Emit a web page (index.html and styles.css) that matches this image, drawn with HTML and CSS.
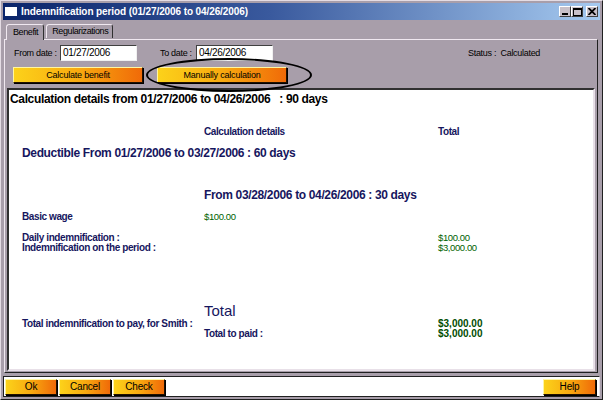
FILE: index.html
```html
<!DOCTYPE html>
<html>
<head>
<meta charset="utf-8">
<link rel="stylesheet" href="styles.css">
</head>
<body>
<div class="window">
  <div class="titlebar">
    <span class="appicon"></span>
    <span class="title">Indemnification period (01/27/2006 to 04/26/2006)</span>
    <span class="wbtns">
      <span class="wbtn"><svg width="8" height="7" viewBox="0 0 8 7"><rect x="1" y="5" width="6" height="2" fill="#000"/></svg></span>
      <span class="wbtn"><svg width="9" height="8" viewBox="0 0 9 8"><rect x="0.5" y="0.5" width="8" height="7" fill="none" stroke="#000"/><rect x="0" y="0" width="9" height="2" fill="#000"/></svg></span>
      <span class="wbtn close"><svg width="8" height="7" viewBox="0 0 8 7"><path d="M0.5 0 L7.5 7 M7.5 0 L0.5 7" stroke="#000" stroke-width="1.8"/></svg></span>
    </span>
  </div>
  <div class="tabs">
    <span class="tab active">Benefit</span>
    <span class="tab">Regularizations</span>
  </div>
  <div class="panel">
    <div class="formrow">
      <span class="lbl from">From date :</span>
      <span class="field">01/27/2006</span>
      <span class="lbl to">To date :</span>
      <span class="field">04/26/2006</span>
      <span class="status">Status :&nbsp; Calculated</span>
    </div>
    <div class="btnrow">
      <span class="obtn wide">Calculate benefit</span>
      <span class="obtn wide second">Manually calculation</span>
    </div>
    <div class="ellipse"></div>
    <div class="report">
      <div class="r-head">Calculation details from 01/27/2006 to 04/26/2006 &nbsp; : 90 days</div>
      <div class="row colheads"><span></span><span>Calculation details</span><span>Total</span></div>
      <div class="r-sub deduct">Deductible From 01/27/2006 to 03/27/2006 : 60 days</div>
      <div class="row period"><span></span><span class="r-sub">From 03/28/2006 to 04/26/2006 : 30 days</span><span></span></div>
      <div class="row wage"><span>Basic wage</span><span class="money">$100.00</span><span></span></div>
      <div class="row daily"><span>Daily indemnification :</span><span></span><span class="money">$100.00</span></div>
      <div class="row onperiod"><span>Indemnification on the period :</span><span></span><span class="money">$3,000.00</span></div>
      <div class="row bigtotal"><span></span><span class="big">Total</span><span></span></div>
      <div class="row topay"><span>Total indemnification to pay, for Smith :</span><span></span><span class="money strong">$3,000.00</span></div>
      <div class="row paid"><span></span><span>Total to paid :</span><span class="money strong">$3,000.00</span></div>
    </div>
  </div>
  <div class="footer">
    <span class="obtn small">Ok</span>
    <span class="obtn small">Cancel</span>
    <span class="obtn small">Check</span>
    <span class="spacer"></span>
    <span class="obtn small">Help</span>
  </div>
</div>
</body>
</html>
```

FILE: styles.css
```css
* { box-sizing: border-box; }
html, body { margin: 0; padding: 0; }
body {
  width: 603px;
  height: 400px;
  background: #a89eaa;
  font-family: "Liberation Sans", Arial, sans-serif;
  overflow: hidden;
}
.window {
  position: relative;
  width: 603px;
  height: 400px;
  background: #a89eaa;
  border: 1px solid;
  border-color: #e4dce4 #202020 #202020 #e4dce4;
  padding: 2px;
  display: flex;
  flex-direction: column;
}
.titlebar {
  height: 17px;
  flex: none;
  background: linear-gradient(to right, #0a246a 0%, #3a5a9e 45%, #a6caf0 100%);
  display: flex;
  align-items: center;
  padding-left: 2px;
}
.appicon {
  width: 12px;
  height: 9px;
  background: #fff;
  margin-right: 4px;
}
.title {
  color: #fff;
  font-weight: bold;
  font-size: 10px;
  letter-spacing: -0.1px;
  flex: 1;
  white-space: nowrap;
}
.wbtns { display: flex; align-items: center; padding-right: 2px; }
.wbtn {
  width: 12px;
  height: 11px;
  background: #c8c0c8;
  border: 1px solid;
  border-color: #fff #404040 #404040 #fff;
  display: flex;
  align-items: center;
  justify-content: center;
}
.wbtn.close { margin-left: 3px; }
.tabs {
  height: 17px;
  flex: none;
  display: flex;
  align-items: flex-end;
  padding-left: 3px;
  margin-top: 2px;
  position: relative;
  z-index: 2;
}
.tab {
  font-size: 9px;
  letter-spacing: -0.4px;
  height: 14px;
  padding: 0 4px 0 5px;
  line-height: 13px;
  border: 1px solid;
  border-bottom: none;
  border-color: #f0e8f0 #303030 transparent #f0e8f0;
  border-radius: 3px 3px 0 0;
  margin-bottom: 1px;
  margin-right: 2px;
}
.tab.active {
  height: 16px;
  line-height: 15px;
  margin-bottom: -1px;
  background: #a89eaa;
  padding: 0 5px 0 6px;
}
.panel {
  flex: 1;
  margin: 0 2px 0 1px;
  border: 1px solid;
  border-color: #f0e8f0 #202020 #202020 #f0e8f0;
  display: flex;
  flex-direction: column;
  padding: 0 1px 1px 1px;
}
.formrow {
  height: 16px;
  margin-top: 5px;
  display: flex;
  align-items: center;
  font-size: 9px;
  letter-spacing: -0.3px;
  color: #000;
}
.lbl.from { margin-left: 8px; width: 46px; }
.lbl.to { margin-left: 23px; width: 36px; }
.field {
  width: 77px;
  height: 16px;
  background: #fff;
  border: 1px solid;
  border-color: #404040 #f0f0f0 #f0f0f0 #404040;
  padding-left: 2px;
  line-height: 13px;
  font-size: 10px;
  letter-spacing: -0.3px;
}
.status { margin-left: 195px; }
.btnrow {
  display: flex;
  margin-top: 6px;
  padding-left: 7px;
}
.obtn {
  height: 16px;
  background: linear-gradient(to right, #fcd21a 0%, #f8aa10 50%, #f06a08 100%);
  border: 1px solid;
  border-color: #fff6a0 #201000 #201000 #fff6a0;
  box-shadow: 1px 1px 0 #000;
  font-size: 9px;
  letter-spacing: -0.2px;
  color: #000;
  text-align: center;
  line-height: 14px;
}
.obtn.wide { width: 130px; }
.obtn.second { margin-left: 14px; }
.ellipse {
  position: absolute;
  left: 145px;
  top: 57px;
  width: 166px;
  height: 34px;
  border: 2px solid #000;
  border-radius: 50%;
  pointer-events: none;
}
.report {
  flex: 1;
  margin: 5px 1px 0 1px;
  background: #fff;
  border: 2px solid;
  border-color: #303030 #e8e0e8 #e8e0e8 #303030;
  padding-left: 1px;
  color: #16165e;
}
.r-head {
  margin-top: 2px;
  font-size: 12px;
  font-weight: bold;
  line-height: 14px;
  color: #000;
  white-space: pre;
  letter-spacing: -0.35px;
}
.row {
  display: grid;
  grid-template-columns: 182px 234px 1fr;
  padding-left: 12px;
  font-size: 10px;
  font-weight: bold;
  letter-spacing: -0.4px;
  line-height: 10px;
  white-space: nowrap;
}
.r-sub {
  font-size: 12px;
  font-weight: bold;
  line-height: 14px;
  letter-spacing: -0.35px;
  color: #16165e;
}
.colheads { margin-top: 20px; line-height: 12px; }
.deduct { margin-top: 8px; padding-left: 12px; }
.period { margin-top: 28px; line-height: 14px; }
.wage { margin-top: 10px; }
.daily { margin-top: 11px; }
.onperiod { margin-top: 0; }
.bigtotal { margin-top: 49px; line-height: 17px; }
.topay { margin-top: 0; }
.paid { margin-top: 0; }
.big {
  font-size: 15px;
  font-weight: normal;
  letter-spacing: 0;
}
.money {
  color: #006400;
  font-weight: normal;
  font-size: 9.5px;
  letter-spacing: -0.4px;
}
.money.strong {
  font-weight: bold;
  font-size: 10px;
  letter-spacing: 0;
  color: #004d00;
}
.footer {
  height: 21px;
  flex: none;
  margin-top: 3px;
  background: #fff;
  border: 1px solid;
  border-color: #202020 #e8e0e8 #202020 #202020;
  display: flex;
  align-items: center;
  padding: 0 3px 0 1px;
}
.obtn.small { width: 52px; margin-right: 2px; font-size: 10px; }
.spacer { flex: 1; }
.footer .obtn.small:last-child { margin-right: 0; width: 53px; }
```
